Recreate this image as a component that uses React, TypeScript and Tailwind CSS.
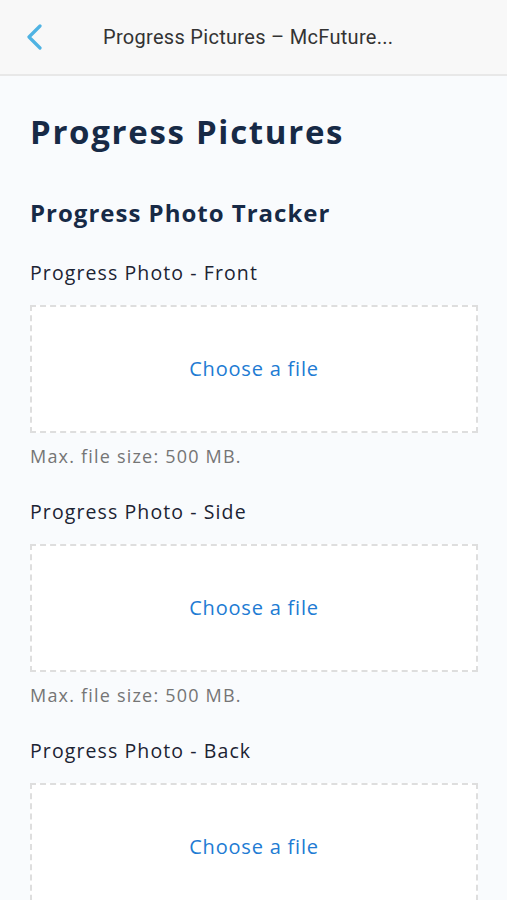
import React from "react";

function Field({ label, last }: { label: string; last?: boolean }) {
  return (
    <div className="flex flex-col">
      <div className="h-[30px] flex items-center text-[19.5px] font-medium text-[#1c2333] tracking-[1.1px]" style={{ fontFamily: '"Open Sans", sans-serif' }}>
        {label}
      </div>
      <div className="mt-[17px] h-[128px] bg-white border-2 border-dashed border-[#dedede] flex items-center justify-center">
        <span className="text-[20px] text-[#217bd3] font-medium tracking-[0.8px]" style={{ fontFamily: '"Open Sans", sans-serif' }}>Choose a file</span>
      </div>
      {!last && (
        <div className="h-[46px] flex items-center text-[18px] text-[#757575] tracking-[1.2px]" style={{ fontFamily: '"Open Sans", sans-serif' }}>
          Max. file size: 500 MB.
        </div>
      )}
    </div>
  );
}

export default function App() {
  return (
    <div className="w-[507px] h-[900px] overflow-hidden bg-[#f9fbfd]">
      <div className="h-[76px] bg-[#f8f8f8] border-b-2 border-[#e8e8e8] flex items-center">
        <div className="w-[103px] pl-[25px] flex items-center">
          <svg width="20" height="26" viewBox="0 0 20 26" fill="none">
            <path d="M15 2 L4 13 L15 24" stroke="#4fb3e3" strokeWidth="3.2" strokeLinecap="round" strokeLinejoin="round" />
          </svg>
        </div>
        <div className="text-[20px] text-[#333333] -mt-[1px] tracking-[0.3px]" style={{ fontFamily: 'Roboto, sans-serif' }}>
          Progress Pictures – McFuture...
        </div>
      </div>
      <div className="pl-[30px] pr-[29px]">
        <h1 className="mt-[34px] h-[44px] flex items-center text-[33px] font-bold text-[#172a46] tracking-[1.7px]" style={{ fontFamily: '"Open Sans", sans-serif' }}>
          Progress Pictures
        </h1>
        <h2 className="mt-[43px] h-[32px] flex items-center text-[24px] font-bold text-[#172a46] tracking-[1px]" style={{ fontFamily: '"Open Sans", sans-serif' }}>
          Progress Photo Tracker
        </h2>
        <div className="mt-[29px] flex flex-col gap-[18px]">
          <Field label="Progress Photo - Front" />
          <Field label="Progress Photo - Side" />
          <Field label="Progress Photo - Back" last />
        </div>
      </div>
    </div>
  );
}
